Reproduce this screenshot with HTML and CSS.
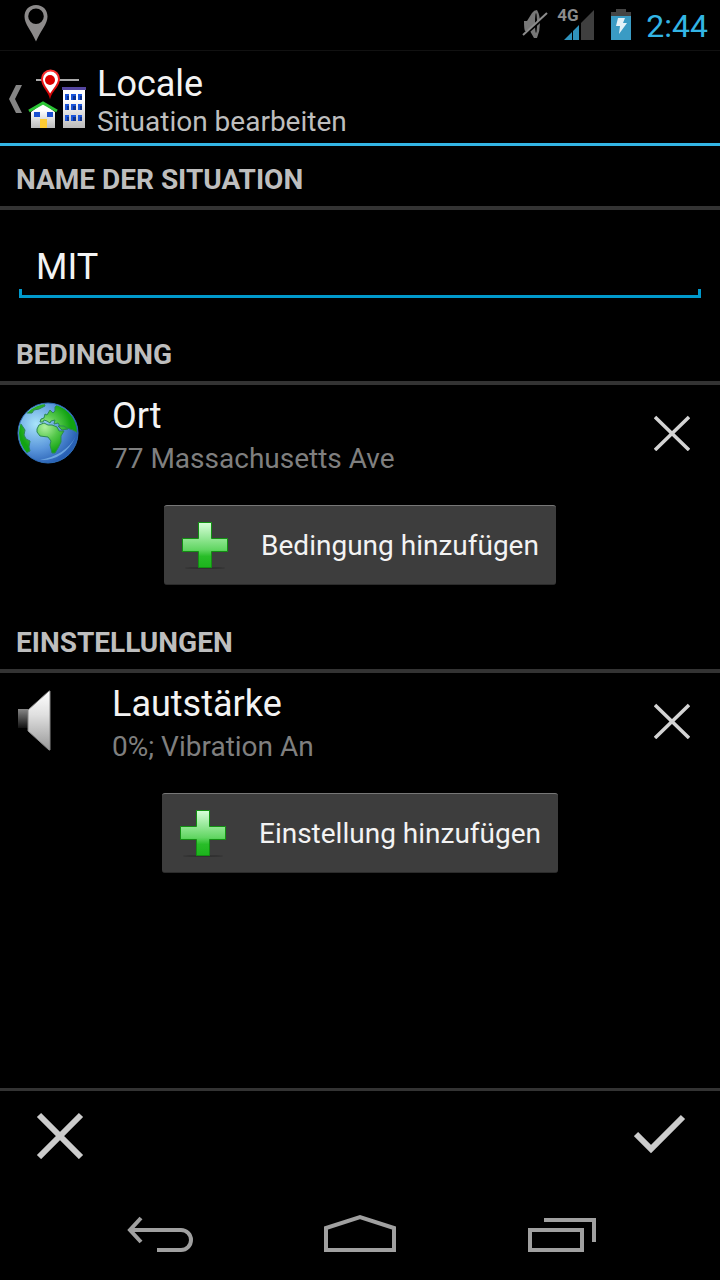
FILE: index.html
```
<!DOCTYPE html>
<html lang="de">
  <head>
    <meta charset="UTF-8" />
    <meta name="viewport" content="width=device-width, initial-scale=1" />
    <title>Locale - Situation bearbeiten</title>
    <link rel="stylesheet" href="styles.css">
  </head>
  <body>
    <div class="status-bar">
      <svg class="status-pin" width="24" height="38" viewBox="0 0 24 38" aria-hidden="true">
        <path fill="#8c8a8a" fill-rule="evenodd" d="M12 0C5 0 .5 5 .5 11.500C.5 19 7 25 12 36.500C17 25 23.500 19 23.500 11.500C23.500 5 19 0 12 0ZM12 3.500a7.800 7.800 0 1 1 0 15.600a7.800 7.800 0 1 1 0-15.600Z" />
      </svg>
      <div class="status-icons">
        <svg width="26" height="30" viewBox="0 0 26 30" aria-hidden="true">
          <path fill="#777" d="M2 12H5L10 4Q12 1 15 1Q18 6 18 14T15 29H12L8 22H3Q2 20 2 12z" />
          <ellipse cx="14" cy="14" rx="1" ry="10" fill="#000" />
          <path d="M-1 29L25 6" stroke="#000" stroke-width="3" />
          <path d="M1 26L25 4" stroke="#8c8c8c" stroke-width="2" />
        </svg>
        <div class="signal">
          <svg width="31" height="31" viewBox="0 0 31 31" aria-hidden="true">
            <path fill="#3f3f3f" d="M17 31V14L30 1v30z" />
            <path fill="#2f93bd" d="M0 31L8 23v8zM9 31V22L15 16v15z" />
          </svg>
          <span class="signal-type">4G</span>
        </div>
        <svg width="20" height="31" viewBox="0 0 20 31" aria-hidden="true">
          <path fill="#444" d="M5 0h10v3h5v5H0V3h5z" />
          <path fill="#3a9bc4" d="M0 7h20v24H0z" />
          <path fill="#e4f1f7" d="M7 9h7l-2 5h4L8 25l1-8H5z" />
        </svg>
      </div>
      <span class="clock">2:44</span>
    </div>

    <header class="action-bar">
      <a href="#" class="up" aria-label="Zurück">
        <svg width="14" height="28" viewBox="0 0 14 28" aria-hidden="true">
          <path fill="#858585" d="M8 0h6L7 14l7 14H8L1 14z" />
        </svg>
        <svg class="logo" width="60" height="60" viewBox="0 0 60 60" aria-hidden="true">
          <defs>
            <linearGradient id="wall" x2="0" y2="1">
              <stop offset=".3" stop-color="#fff" />
              <stop offset="1" stop-color="#bbb" />
            </linearGradient>
            <linearGradient id="pin" x2="0" y2="1">
              <stop offset="0" stop-color="#f33" />
              <stop offset="1" stop-color="#c00" />
            </linearGradient>
          </defs>
          <path fill="#aaa" d="M8 10h43v2H8z" />
          <path fill="url(#wall)" d="M35 19h22v40H35z" />
          <path fill="#5546a0" d="M34 18h24v3H34z" />
          <path fill="#1b55d9" d="M37 25h4v6h-4zM43 25h5v6h-5zM50 25h4v6h-4zM37 35h4v6h-4zM43 35h5v6h-5zM50 35h4v6h-4zM37 46h4v6h-4zM43 46h5v6h-5zM50 46h4v6h-4z" />
          <path fill="#0b3290" d="M39 27h2v4h-2zM45 27h3v4h-3zM52 27h2v4h-2zM39 37h2v4h-2zM45 37h3v4h-3zM52 37h2v4h-2zM39 48h2v4h-2zM45 48h3v4h-3zM52 48h2v4h-2z" />
          <path fill="url(#wall)" d="M3 43L15 34l12 9v16H3z" />
          <path fill="none" stroke="#2bc435" stroke-width="3" d="M1 42L15 34l14 8" />
          <path fill="#1b4fd0" d="M6 43h6v5H6zM19 43h6v5h-6z" />
          <path fill="#fc3" d="M12 50h7v9h-7z" />
          <path fill="#fff" stroke="url(#pin)" stroke-width="2" d="M22 27C20 21 14 17 14 10a8.500 8.500 0 0 1 17 0C31 17 24 21 22 27Z" />
          <circle cx="22" cy="11" r="5" fill="#d90000" />
        </svg>
      </a>
      <div>
        <h1>Locale</h1>
        <p class="subtitle">Situation bearbeiten</p>
      </div>
    </header>

    <main>
      <h2><label for="situationName">NAME DER SITUATION</label></h2>
      <div class="name-field">
        <input type="text" id="situationName" value="MIT" />
      </div>

      <h2>BEDINGUNG</h2>
      <div class="item">
        <svg class="item-icon" width="64" height="64" viewBox="0 0 64 64" aria-hidden="true">
          <defs>
            <radialGradient id="sea" cx=".3" cy=".35" r=".7">
              <stop offset="0" stop-color="#a8e4fa" />
              <stop offset=".6" stop-color="#5b97dc" />
              <stop offset="1" stop-color="#2860b4" />
            </radialGradient>
            <radialGradient id="land" gradientUnits="userSpaceOnUse" cx="29" cy="26" r="26">
              <stop offset="0" stop-color="#b0f0a0" />
              <stop offset=".5" stop-color="#55c84b" />
              <stop offset="1" stop-color="#12a312" />
            </radialGradient>
            <clipPath id="disc"><circle cx="32" cy="32" r="29" /></clipPath>
          </defs>
          <circle cx="32" cy="32" r="30" fill="url(#sea)" stroke="#2f6eb8" />
          <path d="M24 59Q48 60 60 35Q50 54 24 59z" fill="#84bdf0" opacity=".7" />
          <g clip-path="url(#disc)" fill="url(#land)" stroke="#2d8855" stroke-width="1">
            <path d="M0 22L5 23L9 29L8 34L10 38L14 40L13 46L14 50L10 52L0 50z" />
            <path d="M10 12L14 7L20 3L28 2L29 5L23 8L18 9L16 12z" />
            <path d="M24 21L25 18L28 17L29 13L31 14L34 9L37 12L39 10L39 6L41 4L50 5L62 18V32L57 29L51 27L47 28L44 25L42 22L38 23L39 19L35 20L34 22L31 20L28 19L27 21z" />
            <path d="M21 28L23 24L28 22L32 24L36 24L41 26L43 30L48 30L45 35L45 41L42 47L39 52L36 52L34 44L35 40L32 36L24 35L21 31z" />
            <path d="M42 25L46 29L52 28L48 25z" />
          </g>
        </svg>
        <div class="item-text">
          <div class="item-title">Ort</div>
          <div class="item-detail">77 Massachusetts Ave</div>
        </div>
        <button type="button" class="remove-btn" aria-label="Ort entfernen">
          <svg width="36" height="36" viewBox="0 0 36 36" aria-hidden="true">
            <path d="M1 2L35 35M35 2L1 35" stroke="#d4d4d4" stroke-width="3.500" />
          </svg>
        </button>
      </div>
      <button type="button" class="add-btn">
        <svg width="48" height="48" viewBox="0 0 48 48" aria-hidden="true">
          <defs>
            <linearGradient id="plus" x2="0" y2="1">
              <stop offset="0" stop-color="#d8ffda" />
              <stop offset=".6" stop-color="#62d663" />
              <stop offset=".75" stop-color="#28bd28" />
              <stop offset="1" stop-color="#1cb31c" />
            </linearGradient>
          </defs>
          <ellipse cx="24" cy="47" rx="20" ry="1" fill="#303030" />
          <path fill="url(#plus)" stroke="#129012" d="M17.500 1.500h13v16h16v13h-16v16h-13v-16h-16v-13h16z" />
        </svg>
        Bedingung hinzufügen
      </button>

      <h2>EINSTELLUNGEN</h2>
      <div class="item">
        <svg class="item-icon" width="64" height="64" viewBox="0 0 64 64" aria-hidden="true">
          <defs>
            <linearGradient id="cone" x2="0" y2="1">
              <stop offset="0" stop-color="#fff" />
              <stop offset=".4" stop-color="#e0e0e0" />
              <stop offset="1" stop-color="#989898" />
            </linearGradient>
            <linearGradient id="magnet" x2="0" y2="1">
              <stop offset="0" stop-color="#888" />
              <stop offset="1" stop-color="#111" />
            </linearGradient>
          </defs>
          <path fill="url(#magnet)" d="M2 20h10v19H2z" />
          <path fill="url(#cone)" stroke="#888" stroke-width="1" d="M12 21L33 2h1v59h-1L12 42z" />
        </svg>
        <div class="item-text">
          <div class="item-title">Lautstärke</div>
          <div class="item-detail">0%; Vibration An</div>
        </div>
        <button type="button" class="remove-btn" aria-label="Lautstärke entfernen">
          <svg width="36" height="36" viewBox="0 0 36 36" aria-hidden="true">
            <path d="M1 2L35 35M35 2L1 35" stroke="#d4d4d4" stroke-width="3.500" />
          </svg>
        </button>
      </div>
      <button type="button" class="add-btn">
        <svg width="48" height="48" viewBox="0 0 48 48" aria-hidden="true">
          <ellipse cx="24" cy="47" rx="20" ry="1" fill="#303030" />
          <path fill="url(#plus)" stroke="#129012" d="M17.500 1.500h13v16h16v13h-16v16h-13v-16h-16v-13h16z" />
        </svg>
        Einstellung hinzufügen
      </button>
    </main>

    <footer class="confirm-bar">
      <button type="button" aria-label="Abbrechen">
        <svg width="52" height="48" viewBox="0 0 52 48" aria-hidden="true">
          <path d="M5 4L47 46M47 4L5 46" stroke="#ccc" stroke-width="6" />
        </svg>
      </button>
      <button type="button" aria-label="Speichern">
        <svg width="52" height="48" viewBox="0 0 52 48" aria-hidden="true">
          <path d="M2 23L17 38L49 6" fill="none" stroke="#ccc" stroke-width="6" />
        </svg>
      </button>
    </footer>

    <nav class="nav-bar">
      <button type="button" aria-label="Zurück">
        <svg width="72" height="40" viewBox="0 0 72 40" fill="none" stroke="#a0a0a0" stroke-width="4" aria-hidden="true">
          <path d="M6 16H57a10 10 0 0 1 0 20H33M17 4L6 16L17 28" />
        </svg>
      </button>
      <button type="button" aria-label="Startseite">
        <svg width="72" height="40" viewBox="0 0 72 40" fill="none" stroke="#a0a0a0" stroke-width="4" aria-hidden="true">
          <path d="M2 36V14L36 3L70 14V36z" />
        </svg>
      </button>
      <button type="button" aria-label="Letzte Apps">
        <svg width="72" height="40" viewBox="0 0 72 40" fill="none" stroke="#a0a0a0" stroke-width="4" aria-hidden="true">
          <path d="M6 16H58V36H6zM20 6H70V28" />
        </svg>
      </button>
    </nav>
  </body>
</html>
```

FILE: styles.css
```
* {
  box-sizing: border-box;
}
body {
  margin: 0;
  min-height: 100vh;
  display: flex;
  flex-direction: column;
  background: #000;
  color: #f3f3f3;
  font-family: Roboto, sans-serif;
}
h1,
h2,
p {
  margin: 0;
}
svg {
  display: block;
  flex: none;
}
button {
  border: none;
  padding: 0;
  background: transparent;
  color: inherit;
  font-family: inherit;
  cursor: pointer;
}

/* status bar */
.status-bar {
  display: flex;
  align-items: center;
  padding: 4px 12px 6px 24px;
  height: 51px;
  border-bottom: 1px solid #111;
}
.status-icons {
  display: flex;
  gap: 16px;
  margin-left: auto;
}
.signal {
  position: relative;
}
.signal-type {
  position: absolute;
  top: -4px;
  left: -7px;
  font-size: 17px;
  line-height: 20px;
  font-weight: 700;
  color: #8c8c8c;
}
.clock {
  margin-left: 15px;
  padding-top: 4px;
  font-size: 32px;
  color: #33b5e5;
}

/* action bar */
.action-bar {
  display: flex;
  align-items: center;
  padding: 12px 8px 4px;
  border-bottom: 3px solid #33b5e5;
}
.up {
  display: flex;
  align-items: center;
  gap: 6px;
  margin-right: 9px;
  padding-bottom: 5px;
}
h1 {
  font-size: 36px;
  line-height: 42px;
  font-weight: 400;
}
.subtitle {
  font-size: 28px;
  line-height: 34px;
  color: #bebebe;
}

/* sections */
main {
  flex: 1;
}
h2 {
  padding: 17px 16px 9px;
  border-bottom: 4px solid #333;
  font-size: 28px;
  line-height: 34px;
  font-weight: 700;
  color: #bebebe;
}
.name-field {
  padding: 24px 19px 23px;
}
.name-field input {
  display: block;
  width: 100%;
  height: 64px;
  padding: 4px 17px 0;
  border: none;
  border-bottom: 3px solid #0099cc;
  outline: none;
  /* short ticks at both ends of the underline */
  background:
    linear-gradient(#0099cc, #0099cc) left bottom / 3px 6px no-repeat,
    linear-gradient(#0099cc, #0099cc) right bottom / 3px 6px no-repeat;
  color: inherit;
  font-family: inherit;
  font-size: 36px;
}
.item {
  display: flex;
  align-items: center;
  height: 96px;
  padding: 0 16px;
}
.item-icon {
  margin-right: 32px;
}
.item-text {
  flex: 1;
  padding-top: 8px;
}
.item-title {
  font-size: 36px;
  line-height: 44px;
}
.item-detail {
  font-size: 28px;
  line-height: 42px;
  color: #7f7f7f;
}
.remove-btn {
  padding: 14px;
}
.add-btn {
  display: flex;
  align-items: center;
  gap: 32px;
  height: 80px;
  margin: 24px auto;
  padding: 0 17px;
  border-top: 1px solid #777;
  border-bottom: 1px solid #2b2b2b;
  border-radius: 3px;
  background: #3d3d3d;
  font-size: 28px;
}

/* bottom bars */
.confirm-bar {
  display: flex;
  justify-content: space-between;
  padding: 20px 34px 25px;
  border-top: 3px solid #333;
}
.nav-bar {
  display: flex;
  justify-content: center;
  gap: 128px;
  padding: 30px 0 26px;
}
```
